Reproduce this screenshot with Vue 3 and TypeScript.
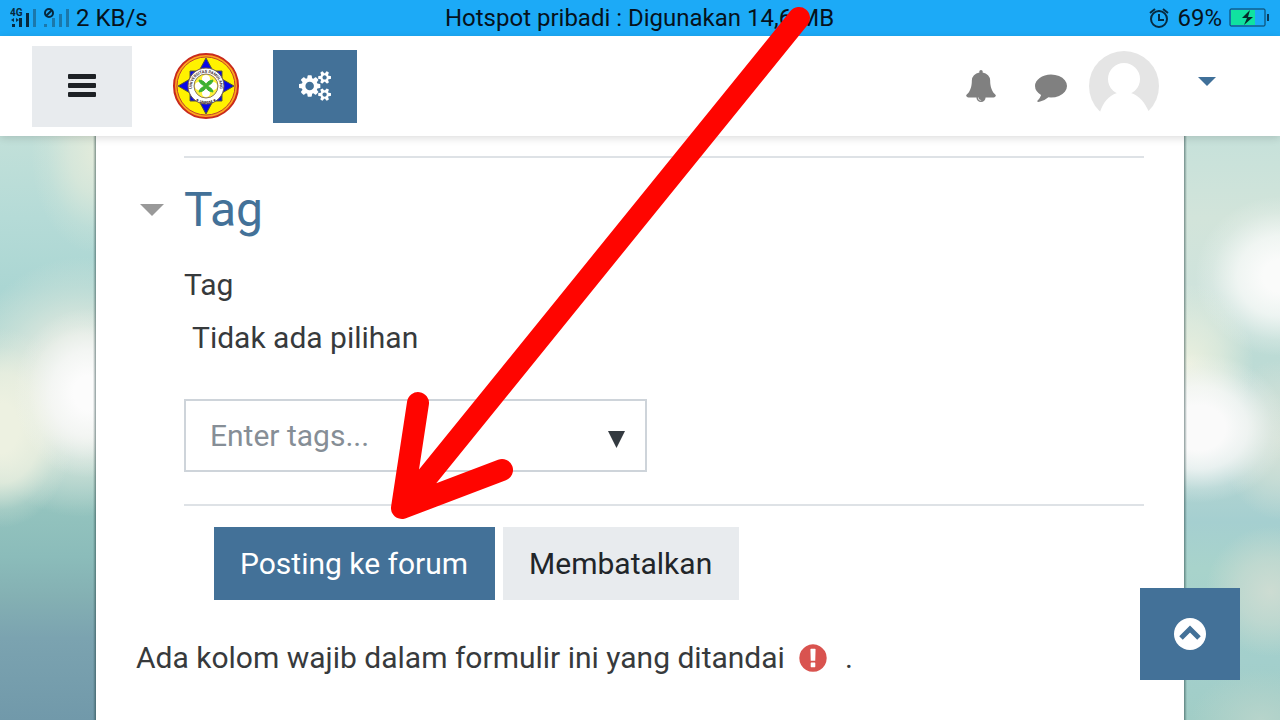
<script setup lang="ts">
import { ref } from 'vue'

const tagQuery = ref<string>('')
const expanded = ref<boolean>(true)
const bars: number[] = [3, 9, 14, 18]
</script>

<template>
  <div class="screen">
    <div class="status">
      <div class="status-side">
        <svg class="signals" width="64" height="24" viewBox="0 0 64 24" aria-hidden="true">
          <text x="0" y="10" class="net">4G</text>
          <path d="M1 14l3-2v4zM9 14l-3-2v4z" fill="#0a3048" />
          <rect
            v-for="(h, i) in bars"
            :key="'a' + i"
            :x="2 + i * 7"
            :y="21 - h"
            width="3"
            :height="h"
            :fill="i === 3 ? '#1b78ab' : '#07283c'"
          />
          <circle cx="39" cy="7" r="4" fill="none" stroke="#07283c" stroke-width="2" />
          <path d="M36 10l6-6" stroke="#07283c" stroke-width="2" />
          <rect x="34" y="18" width="3" height="3" fill="#1b78ab" />
          <rect x="42" y="12" width="3" height="9" fill="#1b78ab" />
          <rect x="49" y="8" width="3" height="13" fill="#1b78ab" />
          <rect x="56" y="3" width="3" height="18" fill="#1b78ab" />
        </svg>
        <span>2 KB/s</span>
      </div>
      <div>Hotspot pribadi : Digunakan 14,6 MB</div>
      <div class="status-side status-right">
        <svg width="22" height="22" viewBox="0 0 22 22" fill="none" stroke="#062a40" stroke-width="2" aria-hidden="true">
          <circle cx="11" cy="12" r="8" />
          <path d="M11 7v6h5M2 6l5-4M20 6l-5-4" />
        </svg>
        <span class="percent">69%</span>
        <svg width="40" height="20" viewBox="0 0 40 20" aria-hidden="true">
          <rect x="1" y="1" width="35" height="17" rx="1" fill="none" stroke="#0a3b58" stroke-width="1" />
          <rect x="2" y="2" width="24" height="15" fill="#10e2a0" />
          <path d="M21 2l-8 8h5l-3 7 9-8h-5z" fill="#062a2a" />
          <rect x="38" y="6" width="2" height="7" fill="#0a3b58" />
        </svg>
      </div>
    </div>

    <header class="navbar">
      <button class="menu" type="button" aria-label="Menu">
        <svg width="28" height="24" viewBox="0 0 28 24" fill="#1d2125" aria-hidden="true">
          <rect y="0" width="28" height="5" rx="1" />
          <rect y="9" width="28" height="5" rx="1" />
          <rect y="18" width="28" height="5" rx="1" />
        </svg>
      </button>
      <a class="brand" href="#" aria-label="Universitas Pamulang">
        <svg width="68" height="68" viewBox="0 0 68 68" aria-hidden="true">
          <defs>
            <path id="ring-top" d="M22 42A14 14 0 1 1 46 42" />
            <path id="ring-bottom" d="M18 36a16 16 0 0 0 32 0" />
          </defs>
          <circle cx="34" cy="34" r="32" fill="#ffa51f" stroke="#c92a1c" stroke-width="2" />
          <circle cx="34" cy="34" r="29" fill="#fff200" stroke="#c0432a" stroke-width="1" />
          <path d="M34 6l7 13h9v8l12 7-12 7v8h-9l-7 13-7-13h-9v-8l-12-7 12-7v-8h9z" fill="#0808e8" stroke="#5a5a30" />
          <circle cx="34" cy="34" r="18" fill="#fff" stroke="#6b5648" />
          <circle cx="34" cy="34" r="12" fill="#fff43a" stroke="#8c755e" />
          <circle v-for="p in [[34, 27], [34, 41], [27, 34], [41, 34]]" :key="p.join()" :cx="p[0]" :cy="p[1]" r="4" fill="#fff" />
          <path d="M27 28q7 1 7 6q0-5 7-6q-1 5-7 6q6 1 7 6q-7-1-7-6q0 5-7 6q1-5 7-6q-6-1-7-6z" fill="#3cb034" stroke="#3cb034" />
          <text class="seal"><textPath href="#ring-top" startOffset="50%" text-anchor="middle">UNIVERSITAS PAMULANG</textPath></text>
          <text class="seal"><textPath href="#ring-bottom" startOffset="50%" text-anchor="middle">★ UNPAM ★</textPath></text>
        </svg>
      </a>
      <button class="settings" type="button" aria-label="Pengaturan">
        <svg width="32" height="30" viewBox="0 0 1920 1792" fill="#fff" aria-hidden="true">
          <path d="M896 896q0-106-75-181t-181-75-181 75-75 181 75 181 181 75 181-75 75-181zm768 512q0-52-38-90t-90-38-90 38-38 90q0 53 37.500 90.500t90.500 37.500 90.500-37.500 37.500-90.500zm0-1024q0-52-38-90t-90-38-90 38-38 90q0 53 37.500 90.500t90.500 37.500 90.500-37.500 37.500-90.500zm-384 421v185q0 10-7 19.500t-16 10.500l-155 24q-11 35-32 76 34 48 90 115 7 11 7 20 0 12-7 19-23 30-82.500 89.500t-78.500 59.500q-11 0-21-7l-115-90q-37 19-77 31-11 108-23 155-7 24-30 24h-186q-11 0-20-7.500t-10-17.500l-23-153q-34-10-75-31l-118 89q-7 7-20 7-11 0-21-8-144-133-144-160 0-9 7-19 10-14 41-53t47-61q-23-44-35-82l-152-24q-10-1-17-9.500t-7-19.500v-185q0-10 7-19.500t16-10.500l155-24q11-35 32-76-34-48-90-115-7-11-7-20 0-12 7-20 22-30 82-89t79-59q11 0 21 7l115 90q34-18 77-32 11-108 23-154 7-24 30-24h186q11 0 20 7.500t10 17.500l23 153q34 10 75 31l118-89q8-7 20-7 11 0 21 8 144 133 144 160 0 8-7 19-12 16-42 54t-45 60q23 48 34 82l152 23q10 2 17 10.500t7 19.500zm640 533v140q0 16-149 31-12 27-30 52 51 113 51 138 0 4-4 7-122 71-124 71-8 0-46-47t-52-68q-20 2-30 2t-30-2q-14 21-52 68t-46 47q-2 0-124-71-4-3-4-7 0-25 51-138-18-25-30-52-149-15-149-31v-140q0-16 149-31 13-29 30-52-51-113-51-138 0-4 4-7 4-2 35-20t59-34 30-16q8 0 46 46.500t52 67.500q20-2 30-2t30 2q51-71 92-112l6-2q4 0 124 70 4 3 4 7 0 25-51 138 17 23 30 52 149 15 149 31zm0-1024v140q0 16-149 31-12 27-30 52 51 113 51 138 0 4-4 7-122 71-124 71-8 0-46-47t-52-68q-20 2-30 2t-30-2q-14 21-52 68t-46 47q-2 0-124-71-4-3-4-7 0-25 51-138-18-25-30-52-149-15-149-31v-140q0-16 149-31 13-29 30-52-51-113-51-138 0-4 4-7 4-2 35-20t59-34 30-16q8 0 46 46.500t52 67.500q20-2 30-2t30 2q51-71 92-112l6-2q4 0 124 70 4 3 4 7 0 25-51 138 17 23 30 52 149 15 149 31z" />
        </svg>
      </button>
      <nav class="user">
        <a href="#" aria-label="Notifikasi">
          <svg width="32" height="32" viewBox="0 0 1792 1792" fill="#808080" aria-hidden="true">
            <path d="M912 1696q0-16-16-16-59 0-101.500-42.500t-42.500-101.500q0-16-16-16t-16 16q0 73 51.500 124.500t124.500 51.500q16 0 16-16zm816-288q0 52-38 90t-90 38h-448q0 106-75 181t-181 75-181-75-75-181h-448q-52 0-90-38t-38-90q50-42 91-88t85-119.500 74.500-158.500 50-206 19.500-260q0-152 117-282.500t307-158.500q-8-19-8-39 0-40 28-68t68-28 68 28 28 68q0 20-8 39 190 28 307 158.500t117 282.500q0 139 19.500 260t50 206 74.500 158.500 85 119.500 91 88z" />
          </svg>
        </a>
        <a class="chat" href="#" aria-label="Pesan">
          <svg width="32" height="32" viewBox="0 0 1792 1792" fill="#808080" aria-hidden="true">
            <path d="M1792 896q0 174-120 321.500t-326 233-450 85.500q-70 0-145-8-198 175-460 242-49 14-114 22-17 2-30.500-9t-17.500-29v-1q-3-4-.5-12t2-10 4.500-9.500l6-9 7-8.500 8-9q7-8 31-34.500t34.500-38 31-39.500 32.500-51 27-59 26-76q-157-89-247.500-220t-90.500-281q0-130 71-248.500t191-204.500 286-136.500 348-50.500q244 0 450 85.500t326 233 120 321.500z" />
          </svg>
        </a>
        <button class="account" type="button" aria-label="Menu pengguna">
          <svg width="70" height="70" viewBox="0 0 70 70" aria-hidden="true">
            <circle cx="35" cy="35" r="35" fill="#e5e5e5" />
            <ellipse cx="35" cy="28" rx="16" ry="16" fill="#fff" />
            <path d="M11 61C14 52 19 45 28 42h14C51 45 56 52 60 61h10v9H0v-9z" fill="#fff" />
          </svg>
          <svg class="caret" width="18" height="9" viewBox="0 0 18 9" aria-hidden="true"><path d="M0 0h18l-9 9z" fill="#407099" /></svg>
        </button>
      </nav>
    </header>

    <div class="body">
      <div class="scenery scenery-left"></div>
      <main class="page">
        <form class="form" @submit.prevent>
          <section class="group">
            <h2 class="legend">
              <button type="button" :aria-expanded="expanded" @click="expanded = !expanded">
                <svg width="24" height="12" viewBox="0 0 24 12" aria-hidden="true"><path d="M0 0h24l-12 12z" fill="#999" /></svg>
                <span>Tag</span>
              </button>
            </h2>
            <label class="label" for="tags">Tag</label>
            <div class="selection">Tidak ada pilihan</div>
            <div class="combo">
              <input id="tags" v-model="tagQuery" type="text" placeholder="Enter tags..." />
              <svg class="combo-arrow" width="17" height="17" viewBox="0 0 17 17" aria-hidden="true"><path d="M0 0h17l-8.500 17z" fill="#343a40" /></svg>
            </div>
          </section>
          <div class="actions">
            <button class="primary" type="submit">Posting ke forum</button>
            <button class="secondary" type="button">Membatalkan</button>
          </div>
          <p class="required">
            <span>Ada kolom wajib dalam formulir ini yang ditandai</span>
            <svg width="32" height="32" viewBox="0 0 1792 1792" fill="#d9534f" aria-hidden="true">
              <path d="M896 128q209 0 385.500 103t279.500 279.500 103 385.500-103 385.500-279.500 279.500-385.500 103-385.500-103-279.500-279.500-103-385.500 103-385.500 279.500-279.500 385.500-103zm128 1247v-190q0-14-9-23.500t-22-9.500h-192q-13 0-23 10t-10 23v190q0 13 10 23t23 10h192q13 0 22-9.500t9-23.500zm-2-344l18-621q0-12-10-18-10-8-24-8h-220q-14 0-24 8-10 6-10 18l17 621q0 10 10 17.500t24 7.500h185q14 0 23.500-7.500t10.500-17.500z" />
            </svg>
            <span class="stop">.</span>
          </p>
        </form>
      </main>
      <div class="scenery scenery-right"></div>
    </div>

    <button class="to-top" type="button" aria-label="Kembali ke atas">
      <svg width="32" height="32" viewBox="0 0 32 32" aria-hidden="true">
        <circle cx="16" cy="16" r="16" fill="#fff" />
        <path d="M7 20l9-9 9 9" fill="none" stroke="#437198" stroke-width="5" />
      </svg>
    </button>

    <svg class="pointer" viewBox="0 0 1280 720" aria-hidden="true">
      <path d="M799 18L402 508M418 403L402 508L502 470" fill="none" stroke="#ff0500" stroke-width="22" stroke-linecap="round" stroke-linejoin="round" />
    </svg>
  </div>
</template>

<style>
body {
  margin: 0;
  overflow-x: hidden;
}
</style>

<style scoped>
.screen {
  position: relative;
  display: flex;
  flex-direction: column;
  min-height: 100vh;
  font-family: Roboto, "Liberation Sans", sans-serif;
  font-size: 30px;
  line-height: 44px;
  color: #373a3c;
  background: #fff;
}
.screen *,
.screen {
  box-sizing: border-box;
}
button {
  font: inherit;
  border: 0;
  padding: 0;
  cursor: pointer;
}
svg {
  display: block;
  flex: none;
}
.status {
  display: flex;
  align-items: center;
  height: 36px;
  padding: 0 11px 0 10px;
  background: #1caaf7;
  color: #06121c;
  font-size: 24px;
  line-height: 36px;
}
.status-side {
  display: flex;
  flex: 1;
  align-items: center;
  gap: 2px;
}
.status-right {
  justify-content: flex-end;
  gap: 7px;
}
.net {
  font: 700 10px Roboto, sans-serif;
  fill: #07283c;
}
.seal {
  font: 700 4px Roboto, "DejaVu Sans", sans-serif;
  fill: #3a2a2a;
}
.navbar {
  position: relative;
  z-index: 1;
  display: flex;
  align-items: center;
  height: 100px;
  padding: 0 64px 0 32px;
  background: #fff;
  box-shadow: 0 2px 8px rgba(0, 0, 0, 0.14);
}
.menu {
  display: grid;
  place-items: center;
  width: 100px;
  height: 81px;
  background: #e8ebee;
}
.brand {
  margin: 0 33px 0 40px;
}
.settings {
  display: grid;
  place-items: center;
  width: 84px;
  height: 73px;
  background: #437198;
}
.user {
  display: flex;
  align-items: center;
  margin-left: auto;
}
.chat {
  margin: 0 22px 0 38px;
}
.account {
  display: flex;
  align-items: center;
  gap: 39px;
  background: none;
}
.caret {
  margin-bottom: 9px;
}
.body {
  display: flex;
  flex: 1;
}
.scenery {
  width: 96px;
}
.scenery-left {
  background:
    linear-gradient(to left, rgba(30, 60, 60, 0.5), transparent 3px),
    radial-gradient(65px 100px at 100% 3%, #e2ebdb, rgba(224, 234, 219, 0.7) 40%, rgba(224, 234, 219, 0.2) 75%, transparent),
    radial-gradient(75px 85px at 92% 44%, #fcfcfc 20%, rgba(250, 250, 250, 0.75) 50%, rgba(245, 248, 246, 0.2) 80%, transparent),
    radial-gradient(75px 100px at 0 50%, #edf1e1 25%, rgba(236, 240, 224, 0.8) 55%, rgba(236, 240, 224, 0.2) 82%, transparent),
    radial-gradient(120px 130px at 85% 43%, #dfe8df 40%, rgba(216, 230, 220, 0.5) 70%, transparent),
    linear-gradient(#c2e0d9, #b5dbd7 14%, #abd6d3 26%, #b5d8d2 38%, #a8d0c9 56%, #93c3be 64%, #8bbcba 72%, #84b0b3 79%, #7ba3b0 86%, #7199aa);
}
.scenery-right {
  background:
    linear-gradient(to right, rgba(30, 60, 60, 0.5), transparent 3px),
    radial-gradient(85px 80px at 100% 24%, #fafbfa 20%, rgba(250, 251, 250, 0.75) 50%, rgba(250, 251, 250, 0.2) 80%, transparent),
    radial-gradient(90px 75px at 15% 50%, #fafafa 30%, rgba(250, 250, 250, 0.75) 55%, rgba(250, 250, 250, 0.2) 82%, transparent),
    radial-gradient(65px 80px at 5% 39%, #ebf0df, rgba(235, 240, 223, 0.6) 50%, transparent),
    radial-gradient(60px 80px at 100% 52%, #d5e2d8, rgba(213, 226, 216, 0.6) 50%, transparent),
    radial-gradient(65px 65px at 90% 78%, #cddcd2, rgba(205, 220, 210, 0.6) 50%, transparent),
    radial-gradient(70px 50px at 80% 100%, #b7d4cb, transparent),
    linear-gradient(#c6e1da, #d2e4da 14%, #cfe3dc 26%, #bcdbd5 38%, #c5dcd6 50%, #b2d4d1 58%, #a5cfd0 66%, #a8d3cb 74%, #a3cfcc 90%, #a1cdc6);
}
.page {
  flex: 1;
  padding: 20px 40px 0;
}
.group {
  margin-left: 48px;
  padding-bottom: 32px;
  border-top: 2px solid #dee2e6;
  border-bottom: 2px solid #dee2e6;
}
.legend {
  margin: 24px 0 25px -44px;
  font-size: 48px;
  font-weight: 400;
  line-height: 56px;
}
.legend button {
  display: flex;
  align-items: center;
  gap: 20px;
  background: none;
  color: #437198;
}
.label {
  display: block;
  margin-bottom: 9px;
}
.selection {
  padding-left: 8px;
}
.combo {
  position: relative;
  width: 463px;
  max-width: 100%;
  margin-top: 39px;
}
.combo input {
  display: block;
  width: 100%;
  height: 73px;
  padding: 0 60px 0 24px;
  border: 2px solid #ced4da;
  border-radius: 0;
  background: #fff;
  color: inherit;
  font: inherit;
}
.combo input::placeholder {
  color: #868e96;
  opacity: 1;
}
.combo-arrow {
  position: absolute;
  right: 22px;
  top: 32px;
  pointer-events: none;
}
.actions {
  display: flex;
  flex-wrap: wrap;
  gap: 8px;
  margin: 21px 0 0 78px;
}
.actions button {
  height: 73px;
  padding: 0 27px 0 26px;
}
.actions .primary {
  background: #437198;
  color: #fff;
}
.actions .secondary {
  background: #e8ebee;
  color: #212529;
}
.required {
  display: flex;
  align-items: center;
  margin: 36px 0 40px;
}
.required svg {
  margin: 0 16px 0 12px;
}
.to-top {
  position: fixed;
  z-index: 2;
  right: 40px;
  bottom: 40px;
  display: grid;
  place-items: center;
  width: 100px;
  height: 92px;
  background: #437198;
}
.pointer {
  position: absolute;
  z-index: 3;
  top: 0;
  left: 0;
  width: 100%;
  pointer-events: none;
}
</style>
